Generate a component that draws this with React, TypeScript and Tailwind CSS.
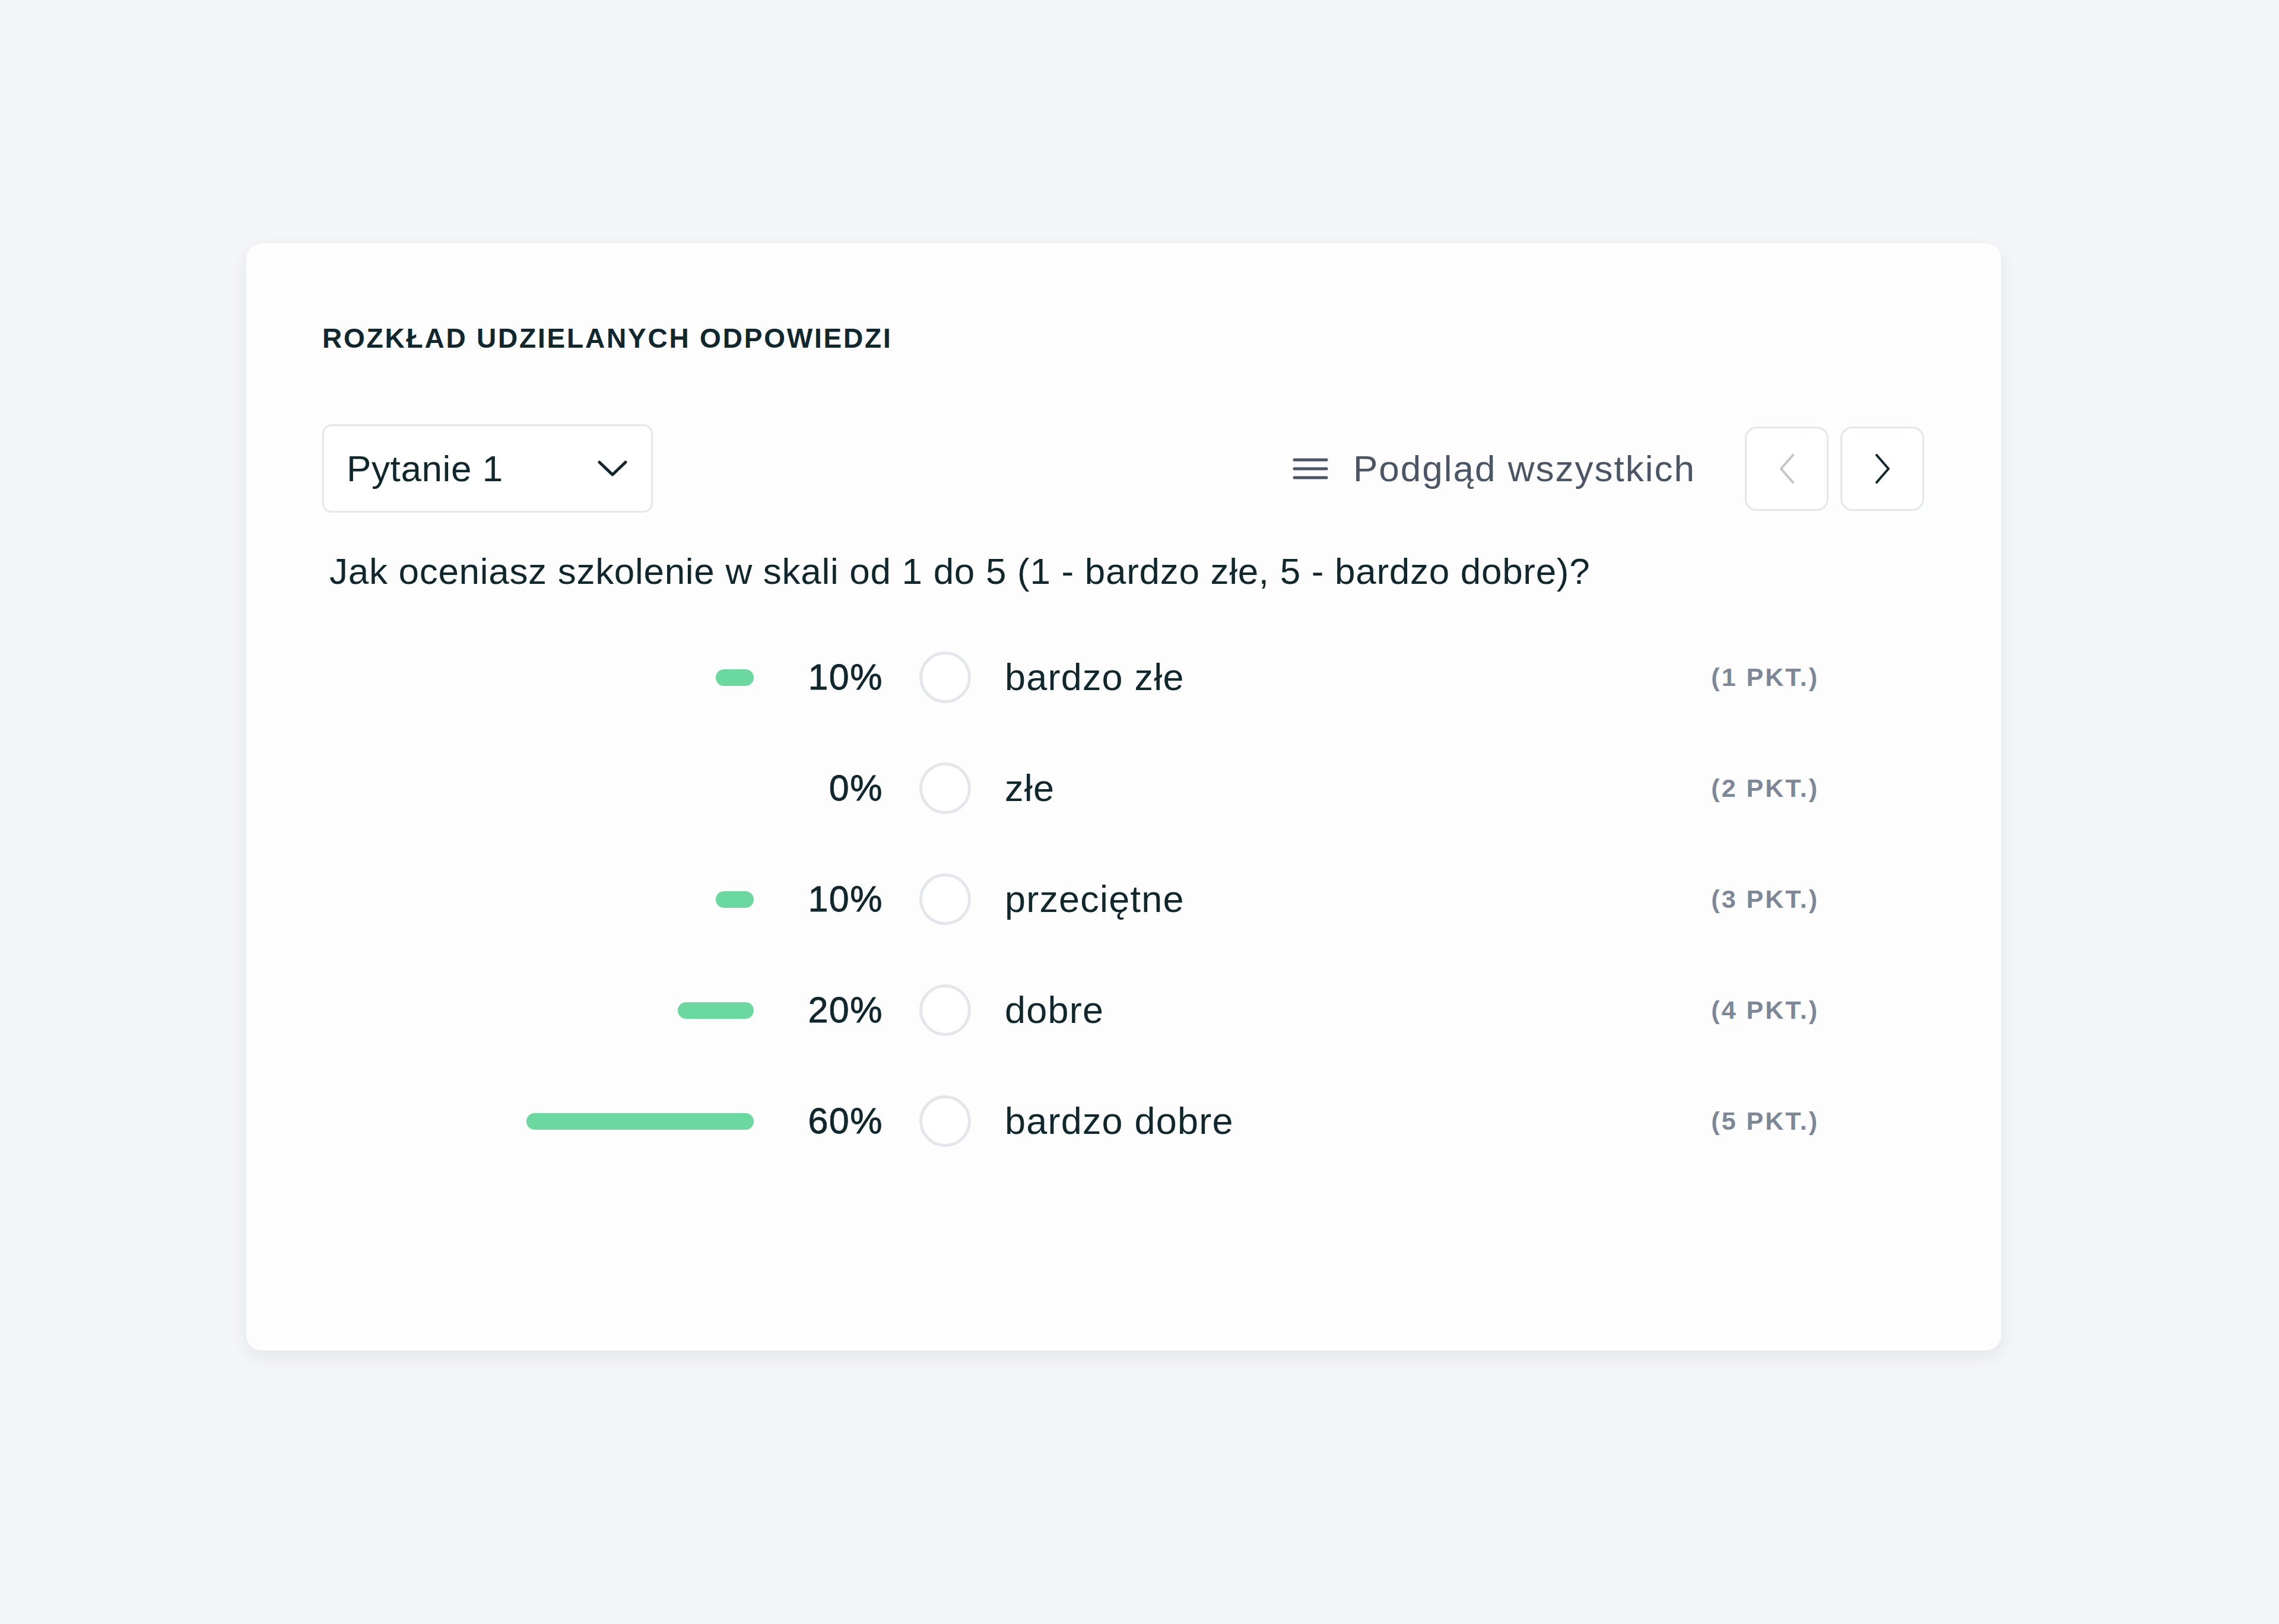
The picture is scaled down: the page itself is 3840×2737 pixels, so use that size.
import React from "react";

type Answer = {
  label: string;
  percent: number;
  points: number;
};

const answers: Answer[] = [
  { label: "bardzo złe", percent: 10, points: 1 },
  { label: "złe", percent: 0, points: 2 },
  { label: "przeciętne", percent: 10, points: 3 },
  { label: "dobre", percent: 20, points: 4 },
  { label: "bardzo dobre", percent: 60, points: 5 },
];

const font = "font-['Liberation_Sans',Arial,sans-serif]";

const MenuIcon = () => (
  <svg width="60" height="40" viewBox="0 0 60 40" fill="none" className="shrink-0">
    <path d="M3 5h54M3 20h54M3 35h54" stroke="#4a5565" strokeWidth="5" strokeLinecap="round" />
  </svg>
);

const ChevronDown = () => (
  <svg width="50" height="28" viewBox="0 0 50 28" fill="none">
    <path d="M3 3l22 21L47 3" stroke="#10272d" strokeWidth="5" strokeLinecap="round" strokeLinejoin="round" />
  </svg>
);

const Chevron = ({ dir, color }: { dir: "left" | "right"; color: string }) => (
  <svg width="26" height="50" viewBox="0 0 26 50" fill="none">
    <path
      d={dir === "left" ? "M23 2L3 25l20 23" : "M3 2l20 23L3 48"}
      stroke={color}
      strokeWidth="4"
      strokeLinecap="round"
      strokeLinejoin="round"
    />
  </svg>
);

const AnswerRow: React.FC<{ answer: Answer }> = ({ answer }) => {
  return (
    <div className="flex h-[187px] items-center pl-[89px]">
      <div className="flex w-[638px] justify-end">
        {answer.percent > 0 && (
          <div
            className="h-[28px] rounded-full bg-[#6bd99f]"
            style={{ width: `${(answer.percent / 100) * 638}px` }}
          />
        )}
      </div>
      <div className="ml-[58px] w-[160px] text-right text-[61px] leading-none tracking-[1.5px] text-[#10272d] [-webkit-text-stroke:0.8px_#10272d]">
        {answer.percent}%
      </div>
      <div className="ml-[61px] h-[87px] w-[87px] shrink-0 rounded-full border-[5px] border-[#e3e6ea] bg-white" />
      <div className="ml-[57px] flex-1 text-[63px] leading-none tracking-[1.2px] text-[#10272d]">{answer.label}</div>
      <div className="mr-[179px] text-[43px] font-bold leading-none tracking-[3px] text-[#7c8797]">
        ({answer.points} PKT.)
      </div>
    </div>
  );
};

export default function App() {
  return (
    <div className={`min-h-screen w-full bg-[#f3f5f8] pl-[415px] pt-[410px] ${font}`}>
      <div className="h-[1866px] w-[2957px] rounded-[26px] bg-[#fdfdfe] px-[128px] pt-[137px] shadow-[0_10px_28px_rgba(30,41,59,0.07)]">
        <h2 className="text-[46px] font-bold leading-none tracking-[2.8px] text-[#10272d]">
          ROZKŁAD UDZIELANYCH ODPOWIEDZI
        </h2>

        <div className="mt-[122px] flex items-center justify-between pr-[2px]">
          <button className="flex h-[149px] w-[557px] items-center justify-between rounded-[16px] border-[3px] border-[#e4e7eb] bg-white pl-[38px] pr-[40px]">
            <span className="text-[62px] leading-none tracking-[0.6px] text-[#10272d]">Pytanie 1</span>
            <ChevronDown />
          </button>

          <div className="flex items-center">
            <MenuIcon />
            <span className="ml-[42px] text-[62px] leading-none tracking-[2px] text-[#4a5565]">Podgląd wszystkich</span>
            <div className="ml-[83px] flex gap-[20px]">
              <button className="flex h-[142px] w-[141px] items-center justify-center rounded-[20px] border-[3px] border-[#e3e6ea] bg-white">
                <Chevron dir="left" color="#c2c7ce" />
              </button>
              <button className="flex h-[142px] w-[141px] items-center justify-center rounded-[20px] border-[3px] border-[#e3e6ea] bg-white">
                <Chevron dir="right" color="#10272d" />
              </button>
            </div>
          </div>
        </div>

        <p className="ml-[12px] mt-[68px] text-[62px] leading-none tracking-[0.7px] text-[#10272d]">
          Jak oceniasz szkolenie w skali od 1 do 5 (1 - bardzo złe, 5 - bardzo dobre)?
        </p>

        <div className="mt-[54px] flex flex-col">
          {answers.map((a) => (
            <AnswerRow key={a.points} answer={a} />
          ))}
        </div>
      </div>
    </div>
  );
}
